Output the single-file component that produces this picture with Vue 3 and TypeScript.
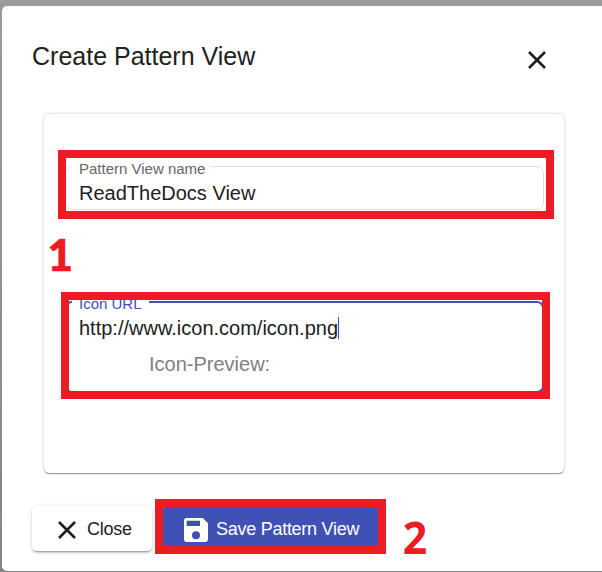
<script setup lang="ts">
import { ref } from 'vue'

const patternName = ref<string>('ReadTheDocs View')
const iconUrl = ref<string>('http://www.icon.com/icon.png')
</script>

<template>
  <div class="backdrop">
    <section class="dialog">
      <header class="dialog-header">
        <h1 class="title">Create Pattern View</h1>
        <button class="icon-button" aria-label="Close dialog">
          <svg class="cross" viewBox="0 0 18 18"><path d="M1 1 17 17M17 1 1 17" /></svg>
        </button>
      </header>

      <main class="card">
        <fieldset class="field name-field">
          <legend><span>Pattern View name</span></legend>
          <div class="value">{{ patternName }}</div>
        </fieldset>
        <fieldset class="field url-field">
          <legend><span>Icon URL</span></legend>
          <div class="value"><span>{{ iconUrl }}</span><i class="caret"></i></div>
          <div class="preview">Icon-Preview:</div>
        </fieldset>
      </main>

      <footer class="actions">
        <button class="button">
          <svg class="cross" viewBox="0 0 18 18"><path d="M1 1 17 17M17 1 1 17" /></svg>
          <span class="close-text">Close</span>
        </button>
        <button class="button primary">
          <svg class="save" viewBox="3 3 18 18">
            <path d="M17 3H5a2 2 0 0 0-2 2v14a2 2 0 0 0 2 2h14c1.100 0 2-.9 2-2V7l-4-4zm-5 16a3 3 0 1 1 0-6 3 3 0 0 1 0 6zm3-10H5V5h10v4z" />
          </svg>
          <span class="save-text">Save Pattern View</span>
        </button>
      </footer>
    </section>

    <div class="mark mark-name"></div>
    <div class="mark mark-url"></div>
    <div class="mark mark-save"></div>
    <span class="step step-one">1</span>
    <span class="step step-two">2</span>
  </div>
</template>

<style>
body {
  overflow: hidden;
}
</style>

<style scoped>
.backdrop {
  position: relative;
  box-sizing: border-box;
  width: 602px;
  height: 572px;
  padding: 6px 0 1px 2px;
  overflow: hidden;
  background: linear-gradient(#9b9b9b, #858585);
  font-family: "Liberation Sans", Arial, sans-serif;
  color: #212121;
}

.dialog {
  box-sizing: border-box;
  width: 610px;
  height: 565px;
  padding: 30px 48px 20px 30px;
  border-radius: 5px;
  background: #fff;
}

.dialog-header {
  display: flex;
  justify-content: space-between;
  height: 78px;
  padding-right: 18.5px;
}

.title {
  margin: 0;
  font-size: 25px;
  font-weight: 400;
  line-height: 41px;
  white-space: nowrap;
}

.icon-button {
  display: flex;
  width: 18px;
  height: 18px;
  margin-top: 15px;
  padding: 0;
  border: 0;
  background: none;
}

.cross {
  flex: none;
  width: 18px;
  height: 18px;
  fill: none;
  stroke: #1c1c1c;
  stroke-width: 2.5;
}

.card {
  box-sizing: border-box;
  width: 520px;
  height: 359px;
  margin-left: 12px;
  padding: 44px 20px 0 21px;
  border-radius: 5px;
  box-shadow: 0 2px 1px -1px rgba(0, 0, 0, .24), 0 1px 1px rgba(0, 0, 0, .16), 0 0 3px rgba(0, 0, 0, .24);
}

.field {
  box-sizing: border-box;
  width: 479px;
  min-width: 0;
  margin: 0;
  padding: 0 0 0 5px;
  border: 1px solid #e0e0e0;
  border-radius: 7px;
}

.field legend {
  height: 16px;
  padding: 0 5px 0 8px;
  color: #666;
  font-size: 15px;
  line-height: 22px;
}

.name-field {
  height: 52px;
}

.url-field {
  height: 99px;
  margin-top: 84px;
  padding-left: 5px;
  border: 2px solid #3f51b5;
}

.url-field legend {
  padding: 0 7px;
  color: #3f51b5;
  line-height: 20px;
}

.value {
  display: flex;
  align-items: center;
  height: 24px;
  margin-top: 7px;
  padding-left: 8px;
  font-size: 20px;
  line-height: 24px;
}

.url-field .value {
  margin-top: 6px;
  padding-left: 7px;
}

.caret {
  width: 1px;
  height: 22px;
  background: #3f51b5;
}

.preview {
  margin: 12px 0 0 77px;
  color: #808080;
  font-size: 20px;
  line-height: 24px;
}

.actions {
  display: flex;
  gap: 10px;
  margin-top: 33px;
}

.button {
  display: flex;
  align-items: center;
  box-sizing: border-box;
  width: 120px;
  height: 45px;
  padding: 2px 0 0 26px;
  border: 0;
  border-radius: 5px;
  background: #fff;
  box-shadow: 0 3px 1px -2px rgba(0, 0, 0, .2), 0 2px 2px rgba(0, 0, 0, .14), 0 1px 5px rgba(0, 0, 0, .12);
  color: #212121;
  font: 18px/24px "Liberation Sans", Arial, sans-serif;
  letter-spacing: -.27px;
  white-space: nowrap;
}

.close-text {
  margin: -2px 0 0 11px;
}

.primary {
  width: 220px;
  padding-left: 22px;
  background: #3f51b5;
  color: #fff;
}

.save {
  width: 24px;
  height: 24px;
  fill: #fff;
}

.save-text {
  margin: -2px 0 0 8px;
}

.mark {
  position: absolute;
  box-sizing: border-box;
  border: 8px solid #ed1c24;
}

.mark-name {
  left: 58px;
  top: 150px;
  width: 496px;
  height: 69px;
}

.mark-url {
  left: 61px;
  top: 292px;
  width: 489px;
  height: 107px;
}

.mark-save {
  left: 155px;
  top: 499px;
  width: 231px;
  height: 55px;
}

.step {
  position: absolute;
  color: #ed1c24;
  font: 900 44px/44px Lato, sans-serif;
  -webkit-text-stroke: .7px #ed1c24;
}

.step-one {
  left: 47.500px;
  top: 232px;
}

.step-two {
  left: 402px;
  top: 515px;
  font: 700 45px/44px "Open Sans", sans-serif;
  -webkit-text-stroke: 0;
  transform: scaleX(.95);
}
</style>
